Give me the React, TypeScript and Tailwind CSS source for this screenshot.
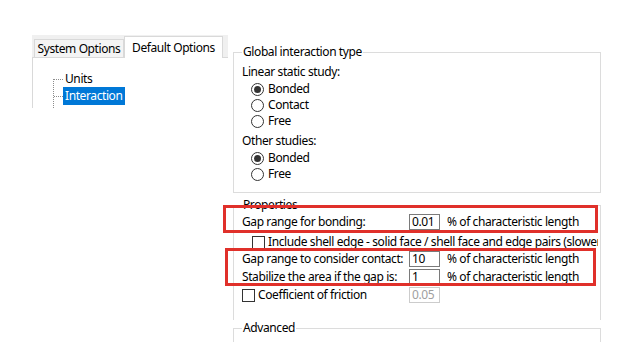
import React from "react";

function Radio({ checked, label }: { checked?: boolean; label: string }) {
  return (
    <div className="flex items-center h-[16px] pl-[9px]">
      <span className="w-[13px] h-[13px] rounded-full border border-[#333] bg-white flex items-center justify-center shrink-0">
        {checked && <span className="w-[7px] h-[7px] rounded-full bg-[#333]" />}
      </span>
      <span className="ml-[4px] leading-[16px]">{label}</span>
    </div>
  );
}

function Box({ value, disabled }: { value: string; disabled?: boolean }) {
  return (
    <div
      className={
        "w-[31px] h-[16px] border flex items-end px-[2px] leading-[14px] shrink-0 " +
        (disabled ? "border-[#cccccc] text-[#a0a0a0]" : "border-[#7a7a7a] text-black")
      }
    >
      {value}
    </div>
  );
}

function Check() {
  return <span className="w-[13px] h-[13px] border border-[#333] bg-white shrink-0" />;
}

function ValueRow({ label, value }: { label: string; value: string }) {
  return (
    <div className="flex items-center h-[18px]">
      <span className="w-[167px] whitespace-nowrap">{label}</span>
      <Box value={value} />
      <span className="ml-[7px] whitespace-nowrap">% of characteristic length</span>
    </div>
  );
}

export default function App() {
  return (
    <div className="relative w-[640px] h-[360px] bg-white text-black text-[12px] leading-[16px] font-['Noto_Sans',sans-serif] tracking-[-0.4px] overflow-hidden">
      <div className="flex items-start">
        {/* Left tab control */}
        <div className="ml-[32px] mt-[35px] w-[196px]">
          <div className="flex items-end h-[23px] bg-[#f0f0f0] border-b border-[#d9d9d9] pl-[2px]">
            <div className="w-[90px] h-[18px] border border-b-0 border-[#d9d9d9] bg-[#f4f4f4] flex items-center justify-center whitespace-nowrap">
              System Options
            </div>
            <div className="w-[99px] h-[22px] -mb-px border border-b-0 border-[#d9d9d9] bg-white flex items-center justify-center whitespace-nowrap">
              Default Options
            </div>
          </div>
          <div className="h-[50px] border-l border-[#d9d9d9] flex pl-[20px] pt-[12px]">
            <svg width="10" height="38" className="shrink-0">
              <line x1="0.5" y1="9" x2="0.5" y2="38" stroke="#8c8c8c" strokeDasharray="1 1" />
              <line x1="1" y1="9.5" x2="10" y2="9.5" stroke="#8c8c8c" strokeDasharray="1 1" />
              <line x1="1" y1="26.5" x2="10" y2="26.5" stroke="#8c8c8c" strokeDasharray="1 1" />
            </svg>
            <div className="flex flex-col">
              <div className="h-[17px] flex items-center px-[2px]">Units</div>
              <div className="h-[18px] flex items-center px-[2px] bg-[#0078d7] text-white">Interaction</div>
            </div>
          </div>
        </div>

        {/* Right panel */}
        <div className="ml-[5px] pt-[44px] w-[368px]">
          <fieldset className="border border-[#dcdcdc] pl-[8px] pb-[9px] h-[149px]">
            <legend className="px-[1px] leading-[16px]">Global interaction type</legend>
            <div className="mt-[4px] h-[16px]">Linear static study:</div>
            <div className="mt-[1px]">
              <Radio checked label="Bonded" />
              <Radio label="Contact" />
              <Radio label="Free" />
            </div>
            <div className="mt-[4px] h-[16px]">Other studies:</div>
            <div className="mt-[1px]">
              <Radio checked label="Bonded" />
              <Radio label="Free" />
            </div>
          </fieldset>

          <fieldset className="mt-[4px] border border-b-0 border-[#dcdcdc] pl-[8px] h-[123px]">
            <legend className="px-[1px] leading-[16px]">Properties</legend>
            <ValueRow label="Gap range for bonding:" value="0.01" />
            <div className="mt-[3px] h-[16px] flex items-center pl-[10px] w-[356px] overflow-hidden whitespace-nowrap">
              <Check />
              <span className="ml-[3px]">Include shell edge - solid face / shell face and edge pairs (slower)</span>
            </div>
            <ValueRow label="Gap range to consider contact:" value="10" />
            <ValueRow label="Stabilize the area if the gap is:" value="1" />
            <div className="flex items-center h-[18px]">
              <div className="w-[167px] flex items-center whitespace-nowrap">
                <Check />
                <span className="ml-[3px]">Coefficient of friction</span>
              </div>
              <Box value="0.05" disabled />
            </div>
          </fieldset>

          <fieldset className="border border-b-0 border-[#dcdcdc] pl-[8px] h-[22px]">
            <legend className="px-[1px] leading-[16px]">Advanced</legend>
          </fieldset>
        </div>
      </div>

      {/* Red annotation rectangles */}
      <div className="absolute left-[223px] top-[205px] w-[375px] h-[28px] border-[3px] border-[#e0302a]" />
      <div className="absolute left-[225px] top-[248px] w-[371px] h-[38px] border-[3px] border-[#e0302a]" />
    </div>
  );
}
